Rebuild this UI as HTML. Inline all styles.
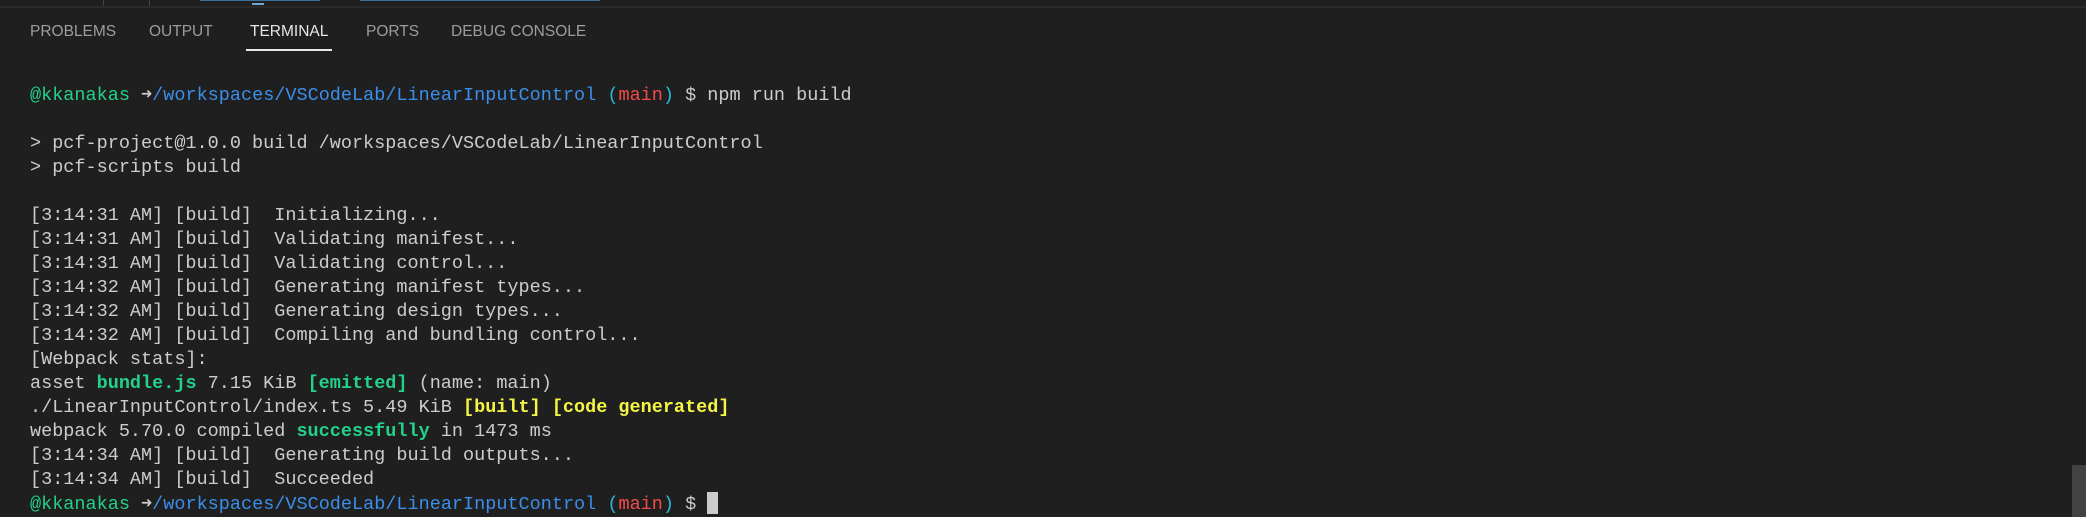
<!DOCTYPE html>
<html><head><meta charset="utf-8"><style>
html,body{margin:0;padding:0;width:2086px;height:517px;overflow:hidden;background:#1f1f1f;}
body{position:relative;font-family:"Liberation Mono",monospace;}
.top{position:absolute;left:0;top:0;width:2086px;height:6px;background:#1f1f1f;overflow:hidden}
.border{position:absolute;left:0;top:6px;width:2086px;height:2px;background:#2b2b2b}
.tab{position:absolute;top:23px;font-family:"Liberation Sans",sans-serif;font-size:15.5px;color:#9d9d9d;letter-spacing:0px}
.ul{position:absolute;left:246px;top:49px;width:86px;height:2px;background:#e7e7e7}
.l{position:absolute;left:30px;font-size:18.5px;color:#cccccc;white-space:pre;line-height:24px;height:24px}
.g{color:#23d18b}.b{color:#3b8eea}.r{color:#f14c4c}.y{color:#f5f543}.c{color:#29b8db}
.bo{font-weight:bold}
.cur{display:inline-block;width:11px;height:22px;background:#cccccc;vertical-align:-5px}
.sb{position:absolute;left:2072px;top:465px;width:14px;height:52px;background:#424242}
</style></head><body>
<div class="top">
<div style="position:absolute;left:103px;top:0;width:1px;height:6px;background:#444"></div>
<div style="position:absolute;left:149px;top:0;width:1px;height:6px;background:#444"></div>
<div style="position:absolute;left:200px;top:0;width:120px;height:1px;background:#3a6f9c"></div>
<div style="position:absolute;left:252px;top:3px;width:12px;height:2px;background:#6ea8d0"></div>
<div style="position:absolute;left:360px;top:0;width:240px;height:1px;background:#3a6f9c"></div>
</div>
<div class="border"></div>
<div class="tab" style="left:30px">PROBLEMS</div>
<div class="tab" style="left:149px">OUTPUT</div>
<div class="tab" style="left:250px;color:#e7e7e7">TERMINAL</div>
<div class="tab" style="left:366px">PORTS</div>
<div class="tab" style="left:451px">DEBUG CONSOLE</div>
<div class="ul"></div>

<div class="l" style="top:84px"><span class="g">@kkanakas</span> <span class="bo">➜</span><span class="b">/workspaces/VSCodeLab/LinearInputControl</span> <span class="c">(</span><span class="r">main</span><span class="c">)</span> $ npm run build</div>
<div class="l" style="top:132px">&gt; pcf-project@1.0.0 build /workspaces/VSCodeLab/LinearInputControl</div>
<div class="l" style="top:156px">&gt; pcf-scripts build</div>
<div class="l" style="top:204px">[3:14:31 AM] [build]  Initializing...</div>
<div class="l" style="top:228px">[3:14:31 AM] [build]  Validating manifest...</div>
<div class="l" style="top:252px">[3:14:31 AM] [build]  Validating control...</div>
<div class="l" style="top:276px">[3:14:32 AM] [build]  Generating manifest types...</div>
<div class="l" style="top:300px">[3:14:32 AM] [build]  Generating design types...</div>
<div class="l" style="top:324px">[3:14:32 AM] [build]  Compiling and bundling control...</div>
<div class="l" style="top:348px">[Webpack stats]:</div>
<div class="l" style="top:372px">asset <span class="g bo">bundle.js</span> 7.15 KiB <span class="g bo">[emitted]</span> (name: main)</div>
<div class="l" style="top:396px">./LinearInputControl/index.ts 5.49 KiB <span class="y bo">[built]</span> <span class="y bo">[code generated]</span></div>
<div class="l" style="top:420px">webpack 5.70.0 compiled <span class="g bo">successfully</span> in 1473 ms</div>
<div class="l" style="top:444px">[3:14:34 AM] [build]  Generating build outputs...</div>
<div class="l" style="top:468px">[3:14:34 AM] [build]  Succeeded</div>
<div class="l" style="top:492px"><span class="g">@kkanakas</span> <span class="bo">➜</span><span class="b">/workspaces/VSCodeLab/LinearInputControl</span> <span class="c">(</span><span class="r">main</span><span class="c">)</span> $ <span class="cur"></span></div>
<div class="sb"></div>
</body></html>
